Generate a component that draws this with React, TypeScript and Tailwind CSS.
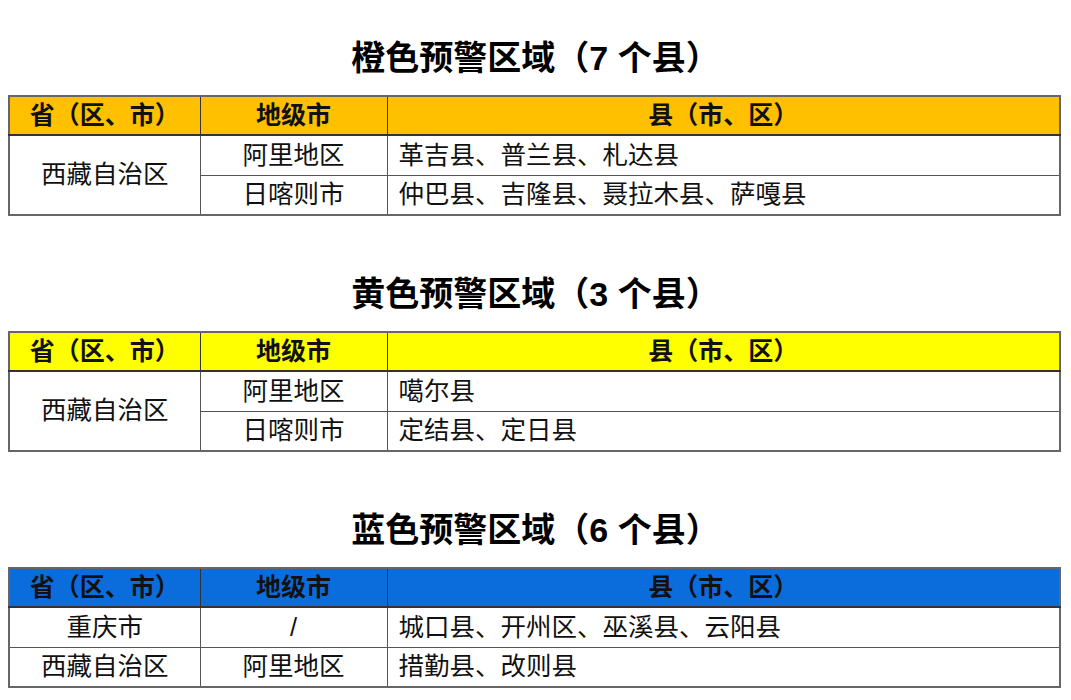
type Row = { province?: string; span?: number; city: string; counties: string };

type Section = { title: string; headBg: string; rows: Row[] };

const sections: Section[] = [
  {
    title: "橙色预警区域（7 个县）",
    headBg: "bg-[#ffc000]",
    rows: [
      { province: "西藏自治区", span: 2, city: "阿里地区", counties: "革吉县、普兰县、札达县" },
      { city: "日喀则市", counties: "仲巴县、吉隆县、聂拉木县、萨嘎县" },
    ],
  },
  {
    title: "黄色预警区域（3 个县）",
    headBg: "bg-[#ffff00]",
    rows: [
      { province: "西藏自治区", span: 2, city: "阿里地区", counties: "噶尔县" },
      { city: "日喀则市", counties: "定结县、定日县" },
    ],
  },
  {
    title: "蓝色预警区域（6 个县）",
    headBg: "bg-[#0b6ddc]",
    rows: [
      { province: "重庆市", span: 1, city: "/", counties: "城口县、开州区、巫溪县、云阳县" },
      { province: "西藏自治区", span: 1, city: "阿里地区", counties: "措勤县、改则县" },
    ],
  },
];

function WarningTable({ section }: { section: Section }) {
  return (
    <section>
      <h2 className="text-center text-[34px] leading-[48px] font-bold text-black mb-[13px]">
        {section.title}
      </h2>
      <table className="ml-[8px] w-[1053px] border-collapse border-2 border-[#666] table-fixed text-[25.5px] text-[#111]">
        <colgroup>
          <col className="w-[191px]" />
          <col className="w-[187px]" />
          <col />
        </colgroup>
        <thead>
          <tr className={`h-[39px] ${section.headBg}`}>
            <th className="border border-[#333] border-b-2 text-[25px] font-bold leading-none">省（区、市）</th>
            <th className="border border-[#333] border-b-2 text-[25px] font-bold leading-none">地级市</th>
            <th className="border border-[#333] border-b-2 text-[25px] font-bold leading-none">县（市、区）</th>
          </tr>
        </thead>
        <tbody>
          {section.rows.map((r, i) => (
            <tr key={i} className="h-[40px]">
              {r.province && (
                <td rowSpan={r.span} className="border border-[#555] text-center leading-none">
                  {r.province}
                </td>
              )}
              <td className="border border-[#555] border-t-black text-center leading-none">{r.city}</td>
              <td className="border border-[#555] border-t-black pl-[11px] leading-none">{r.counties}</td>
            </tr>
          ))}
        </tbody>
      </table>
    </section>
  );
}

export default function App() {
  return (
    <main
      className="w-[1071px] h-[700px] bg-white pt-[34px] flex flex-col gap-[54px] overflow-hidden"
      style={{ fontFamily: '"Liberation Sans", "Noto Sans CJK SC", sans-serif' }}
    >
      {sections.map((s) => (
        <WarningTable key={s.title} section={s} />
      ))}
    </main>
  );
}
